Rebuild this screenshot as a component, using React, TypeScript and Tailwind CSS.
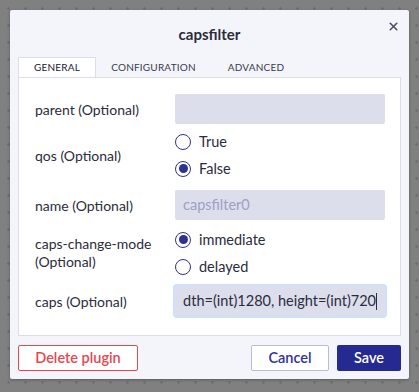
import { X } from 'lucide-react';

function Radio({ checked, label }: { checked: boolean; label: string }) {
    return (
        <label className="flex items-center gap-[8px] h-[27px]">
            <span className="w-[16px] h-[16px] rounded-full border border-[#2d3296] flex items-center justify-center bg-white">
                {checked && <span className="w-[9px] h-[9px] rounded-full bg-[#2d3296]" />}
            </span>
            <span className="text-[14.5px] text-[#2b2c3c]">{label}</span>
        </label>
    );
}

export default function App() {
    return (
        <div
            className="w-[419px] h-[392px] bg-[#808080] p-[10px] pr-[10px]"
            style={{ fontFamily: 'Lato, "Noto Sans", sans-serif' }}
        >
            <div className="w-full h-full relative">
                <div className="absolute inset-0 bg-[radial-gradient(#6e6e6e_1px,transparent_1.5px)] bg-[length:17px_17px] -m-[10px]" />
                <div className="relative w-[399px] h-[369px] bg-[#f4f5fa] rounded-[2px] flex flex-col px-[8px] shadow-[0_1px_3px_rgba(0,0,0,0.3)]">
                    <div className="h-[47px] flex items-center justify-center relative">
                        <h1 className="text-[15px] font-bold text-[#2b2c3c] pt-[2px]">capsfilter</h1>
                        <button className="absolute right-[1px] top-[10px] text-[#4c4e68]">
                            <X size={13} strokeWidth={3} />
                        </button>
                    </div>
                    <div className="flex text-[10px] tracking-[0.2px] text-[#3a3b4d] h-[20px]">
                        <div className="w-[78px] bg-white border border-b-0 border-[#dcdde8] flex items-center justify-center text-[#1f2030]">GENERAL</div>
                        <div className="w-[115px] flex items-center justify-center">CONFIGURATION</div>
                        <div className="w-[90px] flex items-center justify-center">ADVANCED</div>
                    </div>
                    <div className="h-[259px] bg-white border border-[#dcdde8] pl-[16px] pr-[15px] pt-[16px] flex flex-col text-[14px] text-[#2b2c3c]">
                        <div className="flex items-center h-[30px]">
                            <div className="w-[140px]">parent (Optional)</div>
                            <input className="flex-1 h-[30px] bg-[#dcdeeb] rounded-[2px] outline-none px-[8px]" />
                        </div>
                        <div className="flex items-center mt-[4px]">
                            <div className="w-[140px]">qos (Optional)</div>
                            <div className="flex flex-col">
                                <Radio checked={false} label="True" />
                                <Radio checked={true} label="False" />
                            </div>
                        </div>
                        <div className="flex items-center h-[30px] mt-[8px]">
                            <div className="w-[140px]">name (Optional)</div>
                            <div className="flex-1 h-[30px] bg-[#dcdeeb] rounded-[2px] px-[8px] flex items-center text-[#9da0c6] text-[14.5px]">capsfilter0</div>
                        </div>
                        <div className="flex items-center mt-[6px]">
                            <div className="w-[140px] leading-[18px]">caps-change-mode<br />(Optional)</div>
                            <div className="flex flex-col">
                                <Radio checked={true} label="immediate" />
                                <Radio checked={false} label="delayed" />
                            </div>
                        </div>
                        <div className="flex items-center h-[30px] mt-[6px]">
                            <div className="w-[140px]">caps (Optional)</div>
                            <div className="flex-1 h-[30px] bg-[#dcdeeb] rounded-[2px] ring-2 ring-[#cfe0fb] flex items-center overflow-hidden justify-end pr-[8px]">
                                <span className="whitespace-nowrap text-[14.5px] text-[#2b2c3c]">dth=(int)1280, height=(int)720</span>
                                <span className="w-[1px] h-[17px] bg-[#2b2c3c] shrink-0" />
                            </div>
                        </div>
                    </div>
                    <div className="flex items-center h-[43px] pt-[1px]">
                        <button className="w-[120px] h-[26px] border border-[#e5474f] text-[#e5474f] bg-white rounded-[2px] text-[14.5px] font-semibold">Delete plugin</button>
                        <div className="flex-1" />
                        <button className="w-[78px] h-[26px] border border-[#b8bbd3] text-[#2d3296] bg-white rounded-[2px] text-[14.5px] font-semibold mr-[8px]">Cancel</button>
                        <button className="w-[64px] h-[26px] bg-[#242a8f] text-white rounded-[2px] text-[14.5px] font-semibold">Save</button>
                    </div>
                </div>
            </div>
        </div>
    );
}
